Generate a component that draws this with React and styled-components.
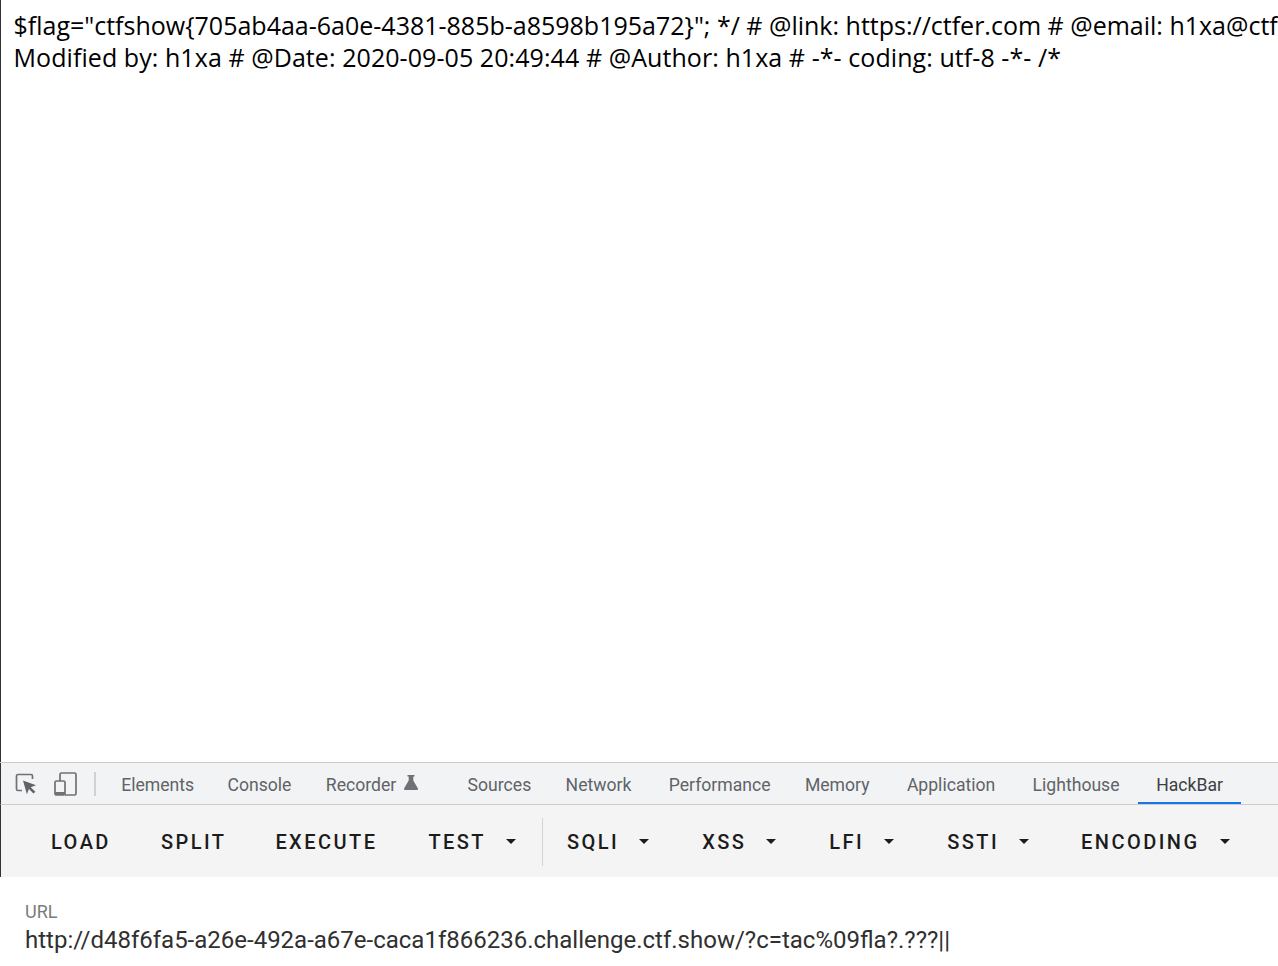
import React from 'react';
import styled, { createGlobalStyle } from 'styled-components';

const GlobalStyle = createGlobalStyle`
  html, body {
    margin: 0;
    padding: 0;
    background: #fff;
    overflow: hidden;
  }
`;

const Page = styled.div`
  width: 1278px;
  height: 966px;
  display: flex;
  flex-direction: column;
  overflow: hidden;
`;

const Viewport = styled.main`
  height: 762px;
  box-sizing: border-box;
  border-left: 1px solid #333;
  padding: 9px 0 0 12.500px;
  overflow: hidden;
  font-family: "Open Sans", "Noto Sans", sans-serif;
  font-size: 25px;
  line-height: 32px;
  color: #000;
`;

const OutputLine = styled.div`
  white-space: nowrap;
  letter-spacing: ${(p) => p.$spacing || 0}px;
`;

const DevTools = styled.section`
  flex: 1;
  display: flex;
  flex-direction: column;
  border-top: 1px solid #cbcdd1;
  font-family: Roboto, sans-serif;
`;

const TabBar = styled.nav`
  height: 41px;
  display: flex;
  align-items: center;
  background: #f1f3f4;
  border-left: 1px solid #333;
  border-bottom: 1px solid #cbcdd1;
`;

const IconButton = styled.button`
  width: 26px;
  height: 26px;
  padding: 0;
  margin-left: ${(p) => p.$gap}px;
  border: 0;
  background: none;
  display: flex;
  align-items: center;
  justify-content: center;
`;

const Divider = styled.span`
  width: 2px;
  height: 24px;
  margin: 0 8px 0 15px;
  background: #cfd1d4;
`;

const Tab = styled.span`
  height: 41px;
  box-sizing: border-box;
  display: flex;
  align-items: center;
  padding: ${(p) => (p.$active ? '4px 18px 0' : '2px 17.200px 0')};
  margin-right: ${(p) => p.$after || 0}px;
  font-size: 17.600px;
  color: ${(p) => (p.$active ? '#3c4043' : '#5f6368')};
  border-bottom: ${(p) => (p.$active ? '2px solid #1a73e8' : '0')};
  white-space: nowrap;
`;

const Toolbar = styled.div`
  height: 72px;
  display: flex;
  align-items: center;
  padding: 1px 0 0 50px;
  box-sizing: border-box;
  background: #f4f4f5;
  border-left: 1px solid #333;
`;

const ToolButton = styled.span`
  display: flex;
  align-items: center;
  margin-right: ${(p) => p.$after}px;
  font-size: 20px;
  font-weight: 500;
  letter-spacing: 2.450px;
  color: #1c1c1c;
  white-space: nowrap;
`;

const Caret = styled.i`
  width: 0;
  height: 0;
  margin-left: ${(p) => p.$gap}px;
  border-left: 5px solid transparent;
  border-right: 5px solid transparent;
  border-top: 5px solid #1c1c1c;
`;

const ToolDivider = styled.span`
  width: 1px;
  height: 48px;
  margin-right: 24px;
  background: #d4d4d6;
`;

const UrlField = styled.div`
  padding: 25px 0 0 25px;
  background: #fff;
`;

const UrlLabel = styled.label`
  display: block;
  font-size: 18px;
  line-height: 20px;
  color: #7b7b7b;
`;

const UrlValue = styled.div`
  margin-top: 2px;
  font-size: 24px;
  line-height: 32px;
  color: #303030;
  white-space: nowrap;
`;

const FlaskWrap = styled.svg`
  width: 14px;
  height: 15px;
  margin: -5px 0 0 8px;
`;

const InspectIcon = () => (
  <svg width="24" height="24" viewBox="0 0 24 24" fill="none">
    <path d="M8 18.500H4A1.500 1.500 0 0 1 2.500 17V4A1.500 1.500 0 0 1 4 2.500h13A1.500 1.500 0 0 1 18.500 4v3" stroke="#6e7175" strokeWidth="1.700" />
    <path d="M9 8.500l13 4.700-5.300 2 4.600 4.600-1.800 1.800-4.600-4.600-2 5.300z" fill="#5f6368" />
  </svg>
);

const DeviceIcon = () => (
  <svg width="26" height="26" viewBox="0 0 26 26" fill="none" stroke="#6e7175" strokeWidth="1.700">
    <path d="M7 10V3.500a1.500 1.500 0 0 1 1.500-1.500h13A1.500 1.500 0 0 1 23 3.500v19a1.500 1.500 0 0 1-1.500 1.500H12" />
    <rect x="2" y="10" width="10" height="14" rx="1.500" />
    <path d="M2 22.500h10" strokeWidth="3" />
  </svg>
);

const FlaskIcon = () => (
  <FlaskWrap viewBox="0 0 14 15">
    <path d="M3.500 0h7v1.500H9.300v4l4.500 7.800c.4.800 0 1.700-.9 1.700H1.100c-.9 0-1.300-.9-.9-1.700l4.500-7.800v-4H3.500z" fill="#6e7175" />
  </FlaskWrap>
);

const tabs = [
  { label: 'Elements', after: -1 },
  { label: 'Console' },
  { label: 'Recorder', flask: true, after: 15 },
  { label: 'Sources' },
  { label: 'Network', after: 3 },
  { label: 'Performance' },
  { label: 'Memory', after: 3 },
  { label: 'Application', after: 3 },
  { label: 'Lighthouse', after: 1.500 },
  { label: 'HackBar', active: true },
];

export default function App() {
  return (
    <Page>
      <GlobalStyle />
      <Viewport>
        <OutputLine>$flag="ctfshow{'{'}705ab4aa-6a0e-4381-885b-a8598b195a72{'}'}"; */ # @link: https://ctfer.com # @email: h1xa@ctfer.com # @Last</OutputLine>
        <OutputLine $spacing={0.07}>Modified by: h1xa # @Date: 2020-09-05 20:49:44 # @Author: h1xa # -*- coding: utf-8 -*- /*</OutputLine>
      </Viewport>
      <DevTools>
        <TabBar>
          <IconButton $gap={12}><InspectIcon /></IconButton>
          <IconButton $gap={14}><DeviceIcon /></IconButton>
          <Divider />
          {tabs.map((t) => (
            <Tab key={t.label} $active={t.active} $after={t.after}>
              {t.label}
              {t.flask && <FlaskIcon />}
            </Tab>
          ))}
        </TabBar>
        <Toolbar>
          <ToolButton $after={50}>LOAD</ToolButton>
          <ToolButton $after={49}>SPLIT</ToolButton>
          <ToolButton $after={51}>EXECUTE</ToolButton>
          <ToolButton $after={26}>TEST<Caret $gap={20} /></ToolButton>
          <ToolDivider />
          <ToolButton $after={53}>SQLI<Caret $gap={20} /></ToolButton>
          <ToolButton $after={53}>XSS<Caret $gap={20} /></ToolButton>
          <ToolButton $after={53}>LFI<Caret $gap={20} /></ToolButton>
          <ToolButton $after={52}>SSTI<Caret $gap={20} /></ToolButton>
          <ToolButton $after={0}>ENCODING<Caret $gap={20} /></ToolButton>
        </Toolbar>
        <UrlField>
          <UrlLabel>URL</UrlLabel>
          <UrlValue>http://d48f6fa5-a26e-492a-a67e-caca1f866236.challenge.ctf.show/?c=tac%09fla?.???||</UrlValue>
        </UrlField>
      </DevTools>
    </Page>
  );
}
